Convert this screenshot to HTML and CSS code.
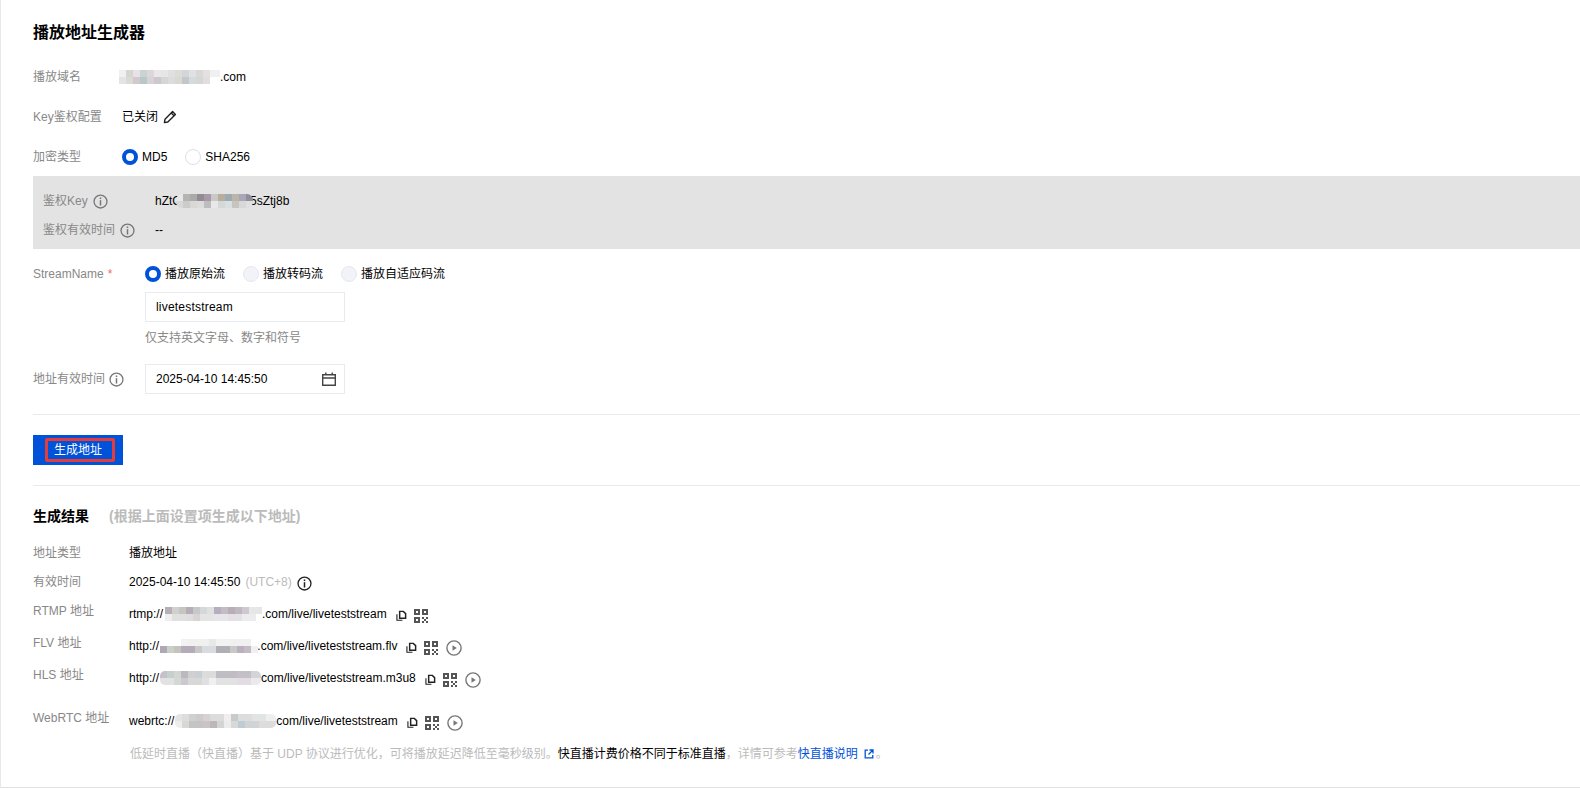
FILE: index.html
```html
<!DOCTYPE html>
<html lang="zh-CN">
<head>
<meta charset="utf-8">
<title>播放地址生成器</title>
<link rel="stylesheet" href="styles.css">
</head>
<body>
<svg class="defs" aria-hidden="true">
  <symbol id="i-info" viewBox="0 0 16 16"><circle cx="8" cy="8" r="6.9" fill="none" stroke="currentColor" stroke-width="1.4"/><rect x="7.2" y="3.7" width="1.6" height="1.7" fill="currentColor"/><rect x="7.2" y="6.6" width="1.6" height="5.7" fill="currentColor"/></symbol>
  <symbol id="i-copy" viewBox="0 0 12 12"><path d="M4 1.5h4l2.5 2.5v5H4z" fill="none" stroke="currentColor" stroke-width="1.6"/><path d="M1 4.5v6.7h6" fill="none" stroke="currentColor" stroke-width="1.2"/></symbol>
  <symbol id="i-qr" viewBox="0 0 14 14"><path fill="currentColor" fill-rule="evenodd" d="M0 0h6v6H0zM2 2v2h2V2zM8 0h6v6H8zM10 2v2h2V2zM0 8h6v6H0zM2 10v2h2v-2zM8 8h2v2H8zM12 8h2v2h-2zM10 10h2v2h-2zM8 12h2v2H8zM12 12h2v2h-2z"/></symbol>
  <symbol id="i-play" viewBox="0 0 16 16"><circle cx="8" cy="8" r="7.1" fill="none" stroke="currentColor" stroke-width="1.4"/><path d="M6.5 5.3 10.8 8l-4.3 2.7z" fill="currentColor"/></symbol>
</svg>
<main class="card">
  <h1 class="title">播放地址生成器</h1>

  <div class="row row-first">
    <span class="label">播放域名</span>
    <span class="value value-tight"><i class="mz mz-domain"></i><span>.com</span></span>
  </div>
  <div class="row row-next">
    <span class="label">Key鉴权配置</span>
    <span class="value">已关闭
      <svg class="icon-pencil" viewBox="0 0 14 14"><path d="M9.6 1.6 12.4 4.4 4.8 12 1.4 12.6 2 9.2z M8.2 3 11 5.8" fill="none" stroke="currentColor" stroke-width="1.4" stroke-linejoin="round"/></svg>
    </span>
  </div>
  <div class="row row-next">
    <span class="label">加密类型</span>
    <span class="value radios">
      <span class="radio"><i class="dot dot-on"></i>MD5</span>
      <span class="radio"><i class="dot dot-off"></i>SHA256</span>
    </span>
  </div>

  <section class="keybox">
    <div class="row">
      <span class="label label-key">鉴权Key <svg class="info"><use href="#i-info"/></svg></span>
      <span class="value value-tight">hZtC<i class="mz mz-key"></i><span>5sZtj8b</span></span>
    </div>
    <div class="row row-key">
      <span class="label label-key">鉴权有效时间 <svg class="info"><use href="#i-info"/></svg></span>
      <span class="value">--</span>
    </div>
  </section>

  <div class="row row-stream">
    <span class="label label-form">StreamName <b class="req">*</b></span>
    <div class="stack">
      <span class="value radios radios-wide">
        <span class="radio"><i class="dot dot-on"></i>播放原始流</span>
        <span class="radio"><i class="dot dot-dis"></i>播放转码流</span>
        <span class="radio"><i class="dot dot-dis"></i>播放自适应码流</span>
      </span>
      <div class="input input-stream">liveteststream</div>
      <div class="hint">仅支持英文字母、数字和符号</div>
    </div>
  </div>
  <div class="row row-date">
    <span class="label label-form">地址有效时间 <svg class="info"><use href="#i-info"/></svg></span>
    <div class="input input-date">2025-04-10 14:45:50
      <svg class="icon-cal" viewBox="0 0 14 14"><path d="M.7 2.7h12.6v10.6H.7zM.7 6h12.6M3.8.5v3M10.2.5v3" fill="none" stroke="currentColor" stroke-width="1.4"/></svg>
    </div>
  </div>

  <hr class="rule rule-top">
  <div class="actions"><button class="btn" type="button"><span class="btn-mark">生成地址</span></button></div>
  <hr class="rule rule-bottom">

  <h2 class="subtitle">生成结果<small>(根据上面设置项生成以下地址)</small></h2>

  <div class="res res-first">
    <span class="res-label">地址类型</span>
    <span class="res-value">播放地址</span>
  </div>
  <div class="res res-time">
    <span class="res-label">有效时间</span>
    <span class="res-value">2025-04-10 14:45:50<em class="tz">(UTC+8)</em><svg class="info info-dark"><use href="#i-info"/></svg></span>
  </div>
  <div class="res res-url">
    <span class="res-label">RTMP 地址</span>
    <span class="res-value url">rtmp://<i class="mz mz-rtmp"></i>.com/live/liveteststream<svg class="copy"><use href="#i-copy"/></svg><svg class="qr"><use href="#i-qr"/></svg></span>
  </div>
  <div class="res res-url">
    <span class="res-label">FLV 地址</span>
    <span class="res-value url">http://<i class="mz mz-flv"></i>r.com/live/liveteststream.flv<svg class="copy"><use href="#i-copy"/></svg><svg class="qr"><use href="#i-qr"/></svg><svg class="play"><use href="#i-play"/></svg></span>
  </div>
  <div class="res res-url">
    <span class="res-label">HLS 地址</span>
    <span class="res-value url">http://<i class="mz mz-hls"></i>com/live/liveteststream.m3u8<svg class="copy"><use href="#i-copy"/></svg><svg class="qr"><use href="#i-qr"/></svg><svg class="play"><use href="#i-play"/></svg></span>
  </div>
  <div class="res res-url res-webrtc">
    <span class="res-label">WebRTC 地址</span>
    <span class="res-value url">webrtc://<i class="mz mz-webrtc"></i>com/live/liveteststream<svg class="copy"><use href="#i-copy"/></svg><svg class="qr"><use href="#i-qr"/></svg><svg class="play"><use href="#i-play"/></svg></span>
  </div>
  <p class="note">低延时直播（快直播）基于 UDP 协议进行优化，可将播放延迟降低至毫秒级别。<strong>快直播计费价格不同于标准直播</strong>，详情可参考<a class="link" href="#">快直播说明</a><svg class="ext" viewBox="0 0 10 10"><path d="M4 1.2H1.2v7.6h7.6V6M5.5 1h3.5v3.5M9 1 4.5 5.5" fill="none" stroke="currentColor" stroke-width="1.3"/></svg>。</p>
</main>
</body>
</html>
```
FILE: styles.css
```css
* { box-sizing: border-box; }
html, body { margin: 0; padding: 0; background: #fff; }
body {
  font-family: "Liberation Sans", "Noto Sans CJK SC", sans-serif;
  font-size: 12px;
  line-height: 20px;
  color: #000;
  height: 788px;
  overflow: hidden;
}
.defs { display: none; }
.card {
  height: 788px;
  padding: 21px 0 0 32px;
  border-left: 1px solid #e8e8e8;
  border-bottom: 1px solid #e0e0e0;
}
.title { margin: 0; font-size: 16px; line-height: 24px; font-weight: 700; color: #000; }

.row { display: flex; align-items: flex-start; }
.row-first { margin-top: 22px; }
.row-next { margin-top: 20px; }
.label { flex: none; width: 89px; color: #888; }
.value { display: flex; align-items: center; height: 20px; color: #000; }
.value-tight { white-space: pre; }

.icon-pencil { width: 14px; height: 14px; margin-left: 5px; color: #222; }
.radios { gap: 18px; }
.radios-wide { gap: 18px; }
.radio { display: flex; align-items: center; gap: 4px; }
.dot { display: block; width: 16px; height: 16px; border-radius: 50%; }
.dot-on { border: 4px solid #0052d9; background: #fff; }
.dot-off { border: 1px solid #dcdfe6; background: #fff; }
.dot-dis { border: 1px solid #e6e8ef; background: #f2f3f8; }

.keybox { margin-top: 9px; height: 73px; padding: 15px 0 0 10px; background: #e3e3e3; }
.row-key { margin-top: 9px; }
.label-key { width: 112px; display: flex; align-items: center; gap: 5px; color: #888; }
.info { width: 15px; height: 15px; color: #777; flex: none; }
.info-dark { color: #222; margin-left: 5px; margin-top: 2px; }

.row-stream { margin-top: 15px; }
.label-form { width: 112px; display: flex; align-items: center; gap: 4px; }
.req { font-weight: 400; color: #e87070; }
.stack { display: flex; flex-direction: column; }
.input {
  display: flex; align-items: center; justify-content: space-between;
  width: 200px; height: 30px; margin-top: 8px; padding: 0 10px;
  border: 1px solid #e7eaef; color: #000;
}
.input-stream { letter-spacing: 0.2px; }
.hint { margin-top: 6px; color: #888; }
.row-date { margin-top: 16px; align-items: center; }
.input-date { margin-top: 0; padding-right: 8px; }
.icon-cal { width: 14px; height: 14px; color: #444; }

.rule { margin: 0; height: 1px; border: 0; background: #e7eaef; }
.rule-top { margin-top: 20px; }
.rule-bottom { margin-top: 20px; }
.actions { margin-top: 20px; height: 30px; }
.btn {
  display: flex; align-items: center; justify-content: flex-start;
  width: 90px; height: 30px; padding: 0 0 0 12px; border: 0;
  background: #0052d9; color: #fff;
  font: inherit;
}
.btn-mark { display: block; width: 70px; height: 24px; line-height: 18px; padding-left: 6px; border: 3px solid #e23c3c; border-radius: 2px; text-align: left; }

.subtitle { margin: 19px 0 0; font-size: 14px; line-height: 22px; font-weight: 700; }
.subtitle small { margin-left: 20px; font-size: 14px; font-weight: 700; color: #bbb; }

.res { display: flex; align-items: flex-start; }
.res-first { margin-top: 16px; }
.res-time { margin-top: 9px; }
.res-url { margin-top: 9px; }
.res-label { flex: none; width: 96px; color: #888; }
.res-value { display: flex; align-items: center; height: 20px; white-space: pre; color: #000; }
.url { margin-top: 3px; }
.res-url + .res-url { margin-top: 9px; }
.res-url + .res-webrtc { margin-top: 20px; }
.tz { font-style: normal; color: #bbb; margin-left: 5px; }
.copy { width: 11px; height: 11px; margin: 3px 0 0 9px; color: #222; flex: none; }
.qr { width: 14px; height: 14px; margin: 3px 0 0 7px; color: #555; flex: none; }
.play { width: 16px; height: 16px; margin: 3px 0 0 8px; color: #777; flex: none; }

.note { margin: 13px 0 0 97px; color: #bbb; white-space: nowrap; }
.note strong { font-weight: 400; color: #000; }
.link { color: #0052d9; text-decoration: none; }
.ext { width: 10px; height: 10px; margin: 0 2px 0 6px; color: #0052d9; vertical-align: -1px; }

.mz { display: block; flex: none; height: 14px; position: relative; z-index: 1; background-size: 100% 50%; background-repeat: no-repeat; background-position: top, bottom; }
.mz-domain { width: 101px; margin-left: -3px; background-image:
  linear-gradient(90deg,#f0f0f0 0 7px,#d6d6d0 0 14px,#e8e2e8 0 21px,#c8d4d2 0 28px,#dcd6dc 0 35px,#eae6ea 0 42px,#e6e6e6 0 49px,#e0e0e0 0 56px,#dcdcd6 0 63px,#d2d6d6 0 70px,#e2e0e4 0 77px,#d8d8d4 0 84px,#e4e0e2 0 91px,#f0f0f0 0),
  linear-gradient(90deg,#e4e4e4 0 7px,#d8dcd6 0 14px,#d4c8d0 0 21px,#b8c8c6 0 28px,#d6d2d6 0 35px,#ccc8cc 0 42px,#d6d6d6 0 49px,#dcdcda 0 56px,#d8dad0 0 63px,#c6c6ca 0 70px,#d2dcdc 0 77px,#d6d6d6 0 84px,#e0dede 0 91px,#fff 0); }
.mz-key { width: 77px; margin: 0 -3px 0 -5px; border-radius: 6px; background-image:
  linear-gradient(90deg,#e8e8e8 0 7px,#b4b4b0 0 14px,#aaa 0 21px,#908c90 0 28px,#a89aa8 0 35px,#c8c8c8 0 42px,#b8ae9c 0 49px,#9caab4 0 56px,#bab6a8 0 63px,#a8a6b8 0 70px,#928e98 0),
  linear-gradient(90deg,#d8d8d8 0 7px,#ccc 0 14px,#d8d8d4 0 21px,#dcdcdc 0 28px,#bdbdbd 0 35px,#e8e8e8 0 42px,#d4d8d8 0 49px,#dadfe0 0 56px,#c8c4c0 0 63px,#d8d8d8 0 70px,#e0e0e0 0); }
.mz-rtmp { width: 97px; margin-left: 2px; background-image:
  linear-gradient(90deg,#b8aeb8 0 7px,#d0d0cc 0 14px,#c6c6c0 0 21px,#b6aeb6 0 28px,#c8c8c8 0 35px,#d4d8d8 0 42px,#e0e0e0 0 49px,#b4aec0 0 56px,#c4bcc4 0 63px,#b8aeb4 0 70px,#c0b8c0 0 77px,#cfc8d0 0 84px,#e6e6e6 0),
  linear-gradient(90deg,#eee 0 7px,#e0e0e0 0 21px,#dedede 0 28px,#d8d4d4 0 35px,#e4e4e4 0 49px,#e6e6ea 0 63px,#e4e0e6 0 77px,#ecebed 0 91px,#fff 0); }
.mz-flv { width: 98px; margin: 0 -4px 0 1px; background-image:
  linear-gradient(90deg,#fff 0 21px,#f2f2f2 0 28px,#f0f0f0 0 49px,#e8e8e8 0 56px,#f2f2f2 0 70px,#f0f0f0 0 91px,#fff 0),
  linear-gradient(90deg,#b0a8b4 0 7px,#c8d0c8 0 14px,#c4c4bc 0 21px,#b4acb8 0 35px,#c8c8c8 0 42px,#d8dce0 0 56px,#b0b0b4 0 70px,#c8c8c8 0 77px,#bcb0bc 0 84px,#c4bcc4 0 91px,#f0f0f0 0); }
.mz-hls { width: 101px; margin-left: 1px; border-radius: 5px; background-image:
  linear-gradient(90deg,#c8c0c8 0 7px,#c4d0cc 0 14px,#d4d4d0 0 21px,#bcb8c0 0 28px,#d0d0d0 0 35px,#c8d0d4 0 42px,#dcdcdc 0 56px,#c0bcc4 0 77px,#c4c0c8 0 91px,#d4d4d8 0),
  linear-gradient(90deg,#e2e2e2 0 14px,#d4d8d4 0 21px,#ccc8d0 0 28px,#d8d8d8 0 42px,#e0e0e4 0 49px,#f0f0f0 0 56px,#e2e2e2 0 77px,#e4dce4 0 91px,#eaeaea 0); }
.mz-webrtc { width: 101px; margin-left: 1px; border-radius: 5px; background-image:
  linear-gradient(90deg,#e4e4e4 0 7px,#ddd 0 14px,#d0d0d0 0 21px,#ccc 0 28px,#d8d0d4 0 35px,#dcdcdc 0 49px,#f0eef0 0 56px,#c8ccc8 0 63px,#ddd 0 77px,#e0e4e4 0 91px,#eee 0),
  linear-gradient(90deg,#eee 0 7px,#d8d8d4 0 14px,#c4c4c4 0 28px,#c8c4c8 0 35px,#bcb8b8 0 42px,#d4d4d4 0 49px,#ececec 0 56px,#d8d8d8 0 63px,#c0ccd4 0 70px,#d0d4d4 0 84px,#dcdcdc 0); }
```
